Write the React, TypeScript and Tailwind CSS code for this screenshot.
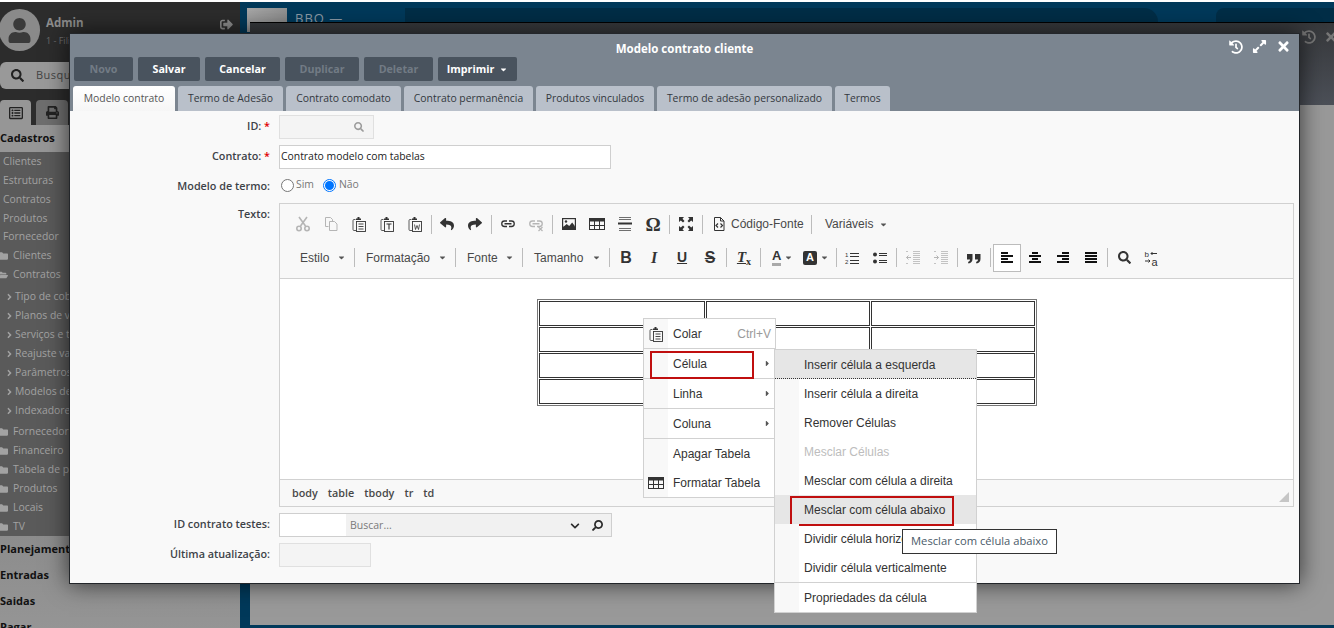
import type { ReactNode } from "react";
import {
  FaCaretDown,
  FaCaretRight,
  FaChevronDown,
  FaExpandAlt,
  FaFolder,
  FaFolderOpen,
  FaHistory,
  FaAngleRight,
  FaPrint,
  FaRegListAlt,
  FaReply,
  FaSearch,
  FaShare,
  FaSignOutAlt,
  FaTimes,
  FaUser,
} from "react-icons/fa";

const OPEN = "font-['Open_Sans','Noto_Sans',sans-serif]";
const ARIAL = "font-['Liberation_Sans',Arial,sans-serif]";

function Svg({ children, dim }: { children: ReactNode; dim?: boolean }) {
  return (
    <svg
      viewBox="0 0 16 16"
      className={`h-4 w-4 ${dim ? "text-[#b5b5b5]" : "text-[#333]"}`}
      fill="none"
      stroke="currentColor"
      strokeWidth="1"
    >
      {children}
    </svg>
  );
}

const Cut = () => (
  <Svg dim>
    <path d="M4 1l6.500 9M12 1L5.500 10" strokeWidth="1.600" />
    <circle cx="4" cy="12.500" r="2.200" strokeWidth="1.600" />
    <circle cx="12" cy="12.500" r="2.200" strokeWidth="1.600" />
  </Svg>
);
const Copy = () => (
  <Svg dim>
    <path d="M2.500 1.500h5l2 2v2M2.500 1.500v9h3" />
    <path d="M6.500 5.500h5l2.500 2.500v6.500h-7.500z" />
  </Svg>
);
const Paste = ({ mark }: { mark: "lines" | "T" | "W" }) => (
  <Svg>
    <path d="M4.500 3.500H3q-1 0-1 1v9q0 1 1 1h2" strokeWidth="0.800" />
    <path d="M5 4V2.500h1.500V1h2v1.500H10V4z" fill="currentColor" stroke="none" />
    <rect x="5.500" y="5.500" width="9" height="10" strokeWidth="0.900" />
    {mark === "lines" && <path d="M7.500 8h5M7.500 10.500h5M7.500 13h5" strokeWidth="0.900" />}
    {mark === "T" && <path d="M7.500 8h5M10 8v5.500" strokeWidth="1.100" />}
    {mark === "W" && <path d="M7.500 8.500l1 5 1.500-4 1.500 4 1-5" strokeWidth="0.800" />}
  </Svg>
);
const LinkIcon = ({ dim }: { dim?: boolean }) => (
  <Svg dim={dim}>
    <path
      d="M7 5H4.500a2.500 2.500 0 0 0 0 5.500H7M9 5h2.500a2.500 2.500 0 0 1 0 5.500H9M4.500 7.750h7"
      strokeWidth="1.300"
    />
    {dim && <path d="M10.500 11l4 4M14.500 11l-4 4" strokeWidth="1.200" />}
  </Svg>
);
const ImageIcon = () => (
  <Svg>
    <rect x="1" y="2" width="14" height="12" fill="currentColor" stroke="none" />
    <rect x="2.200" y="3.200" width="11.600" height="7.500" fill="#f8f8f8" stroke="none" />
    <circle cx="5" cy="5.500" r="1.200" fill="currentColor" stroke="none" />
    <path d="M2.200 11l3.500-3 2.500 2 3-3.500 2.600 3.500v1z" fill="currentColor" stroke="none" />
  </Svg>
);
const TableIcon = () => (
  <Svg>
    <rect x="0.500" y="2.500" width="15" height="11" />
    <rect x="0.500" y="2" width="15" height="3.500" fill="currentColor" stroke="none" />
    <path d="M0.500 9.500h15M5.500 5v8.500M10.500 5v8.500" />
  </Svg>
);
const HrIcon = () => (
  <Svg>
    <path d="M2 1.500h12M2 3.500h12M2 12.500h12M2 14.500h12" strokeWidth="0.700" />
    <path d="M1 7.500h14" strokeWidth="2" />
  </Svg>
);
const MaxIcon = () => (
  <Svg>
    <path
      d="M1 1h5L4.500 2.800 6.500 5 5 6.500 2.800 4.500 1 6zM15 1v5l-1.800-1.500L11 6.500 9.500 5l2-2.200L10 1zM1 15v-5l1.800 1.500L5 9.500 6.500 11l-2 2.200L6 15zM15 15h-5l1.500-1.800L9.500 11l1.500-1.500 2.200 2L15 10z"
      fill="currentColor"
      stroke="none"
    />
  </Svg>
);
const SourceIcon = () => (
  <Svg>
    <path d="M3.500 1.500h6l3.500 3.500v9.500h-9.500z" />
    <path d="M9.500 1.500v3.500h3.500" />
    <path d="M7 7.500l-2 2 2 2M9.500 7.500l2 2-2 2" strokeWidth="1.200" />
  </Svg>
);
const NumList = () => (
  <Svg>
    <text x="1" y="7" fontSize="6" fill="currentColor" stroke="none" fontFamily="Liberation Sans">1</text>
    <text x="1" y="14" fontSize="6" fill="currentColor" stroke="none" fontFamily="Liberation Sans">2</text>
    <path d="M6 3.500h9M6 6.500h9M6 10.500h9M6 13.500h9" />
  </Svg>
);
const BulList = () => (
  <Svg>
    <circle cx="3" cy="4.500" r="2" fill="currentColor" stroke="none" />
    <circle cx="3" cy="11.500" r="2" fill="currentColor" stroke="none" />
    <path d="M7 3.500h8M7 5.500h8M7 10.500h8M7 12.500h8" />
  </Svg>
);
const Indent = ({ out }: { out?: boolean }) => (
  <Svg dim>
    <path d="M8 1.500h7M8 3.500h7M8 5.500h7M8 7.500h7M8 9.500h7M8 11.500h7M8 13.500h7M1 1.500h2M1 13.500h2" strokeWidth="0.800" />
    {out ? (
      <path d="M6 7.500H1.500M3.500 5.500l-2 2 2 2" />
    ) : (
      <path d="M1 7.500h4.500M3.500 5.500l2 2-2 2" />
    )}
  </Svg>
);
const Quote = () => (
  <svg viewBox="0 0 16 16" className="h-4 w-4 text-[#333]" fill="currentColor">
    <path d="M1 4h5.500v5C6.500 11.500 5 13 2.500 13.500L2 12c1.500-.5 2-1.500 2-2.500H1zM9 4h5.500v5c0 2.500-1.500 4-4 4.500L10 12c1.500-.5 2-1.500 2-2.500H9z" />
  </svg>
);
const Align = ({ kind }: { kind: "left" | "center" | "right" | "just" }) => {
  const paths = {
    left: "M2 3h7M2 6h12M2 9h7M2 12h12",
    center: "M5 3h6M2 6h12M5 9h6M2 12h12",
    right: "M7 3h7M2 6h12M7 9h7M2 12h12",
    just: "M2 3h12M2 6h12M2 9h12M2 12h12",
  };
  return (
    <Svg>
      <path d={paths[kind]} strokeWidth="1.800" stroke="#111" />
    </Svg>
  );
};
const Replace = () => (
  <Svg>
    <text x="0.500" y="7" fontSize="8" fill="currentColor" stroke="none" fontFamily="Liberation Sans">b</text>
    <text x="7.500" y="15.500" fontSize="11" fill="currentColor" stroke="none" fontFamily="Liberation Sans">a</text>
    <path d="M7 3.500h6M8.500 2l-1.500 1.500L8.500 5M1 11h5M4.500 9.500L6 11l-1.500 1.500" />
  </Svg>
);

const Btn = ({ children, active }: { children: ReactNode; active?: boolean }) => (
  <div
    className={`flex h-[28px] w-[28px] shrink-0 items-center justify-center ${
      active ? "border border-[#bcbcbc] bg-white" : ""
    }`}
  >
    {children}
  </div>
);

const Sep = ({ l = 2, r = 2 }: { l?: 1 | 2; r?: 1 | 2 | 3 }) => (
  <div
    className={`h-[19px] w-px shrink-0 bg-[#bcbcbc] ${l === 1 ? "ml-px" : "ml-[2px]"} ${
      r === 1 ? "mr-px" : r === 2 ? "mr-[2px]" : "mr-[3px]"
    }`}
  />
);

const Caret = () => <FaCaretDown className="h-[9px] w-[9px] text-[#555]" />;

function Combo({ label, width }: { label: string; width: string }) {
  return (
    <div className={`flex shrink-0 items-center justify-between pl-[10px] pr-[7px] text-[12px] text-[#484848] ${width}`}>
      <span>{label}</span>
      <Caret />
    </div>
  );
}

function Toolbar() {
  return (
    <div className={`border-b border-[#d1d1d1] bg-[#f8f8f8] pb-[4px] pl-[9px] pt-[4px] ${ARIAL}`}>
      <div className="flex h-[32px] items-center">
        <Btn><Cut /></Btn>
        <Btn><Copy /></Btn>
        <Btn><Paste mark="lines" /></Btn>
        <Btn><Paste mark="T" /></Btn>
        <Btn><Paste mark="W" /></Btn>
        <Sep r={1} />
        <Btn><FaReply className="h-[14px] w-[14px] text-[#333]" /></Btn>
        <Btn><FaShare className="h-[14px] w-[14px] text-[#333]" /></Btn>
        <Sep />
        <Btn><LinkIcon /></Btn>
        <Btn><LinkIcon dim /></Btn>
        <Sep />
        <Btn><ImageIcon /></Btn>
        <Btn><TableIcon /></Btn>
        <Btn><HrIcon /></Btn>
        <Btn><span className="font-['Liberation_Serif',serif] text-[19px] font-bold leading-none text-[#333]">Ω</span></Btn>
        <Sep />
        <Btn><MaxIcon /></Btn>
        <Sep />
        <Btn><SourceIcon /></Btn>
        <span className="-ml-[2px] w-[79px] text-[12px] text-[#484848]">Código-Fonte</span>
        <Sep l={1} r={1} />
        <Combo label="Variáveis" width="w-[80px] ml-[2px]" />
      </div>
      <div className="mt-px flex h-[33px] items-center">
        <Combo label="Estilo" width="w-[63px] ml-px" />
        <Sep l={1} r={1} />
        <Combo label="Formatação" width="w-[98px]" />
        <Sep l={1} r={1} />
        <Combo label="Fonte" width="w-[64px]" />
        <Sep l={1} r={1} />
        <Combo label="Tamanho" width="w-[84px]" />
        <Sep l={1} r={2} />
        <Btn><span className="text-[16px] font-bold text-[#333]">B</span></Btn>
        <Btn><span className="font-['Liberation_Serif',serif] text-[16px] font-bold italic text-[#333]">I</span></Btn>
        <Btn><span className="text-[14px] font-bold text-[#333] underline">U</span></Btn>
        <Btn><span className="text-[16px] font-bold text-[#333] line-through">S</span></Btn>
        <Sep r={3} />
        <Btn>
          <span className="font-['Liberation_Serif',serif] text-[15px] font-bold italic text-[#333] underline">
            T<sub className="text-[10px] not-italic">x</sub>
          </span>
        </Btn>
        <Sep l={2} r={1} />
        <div className="flex w-[34px] shrink-0 items-center gap-[3px] pl-[10px]">
          <span className="border-b-[3px] border-[#a9a9a9] text-[13px] font-bold leading-[14px] text-[#333]">A</span>
          <Caret />
        </div>
        <div className="flex w-[39px] shrink-0 items-center gap-[3px] pl-[7px]">
          <span className="flex h-[14px] w-[14px] shrink-0 items-center justify-center rounded-[2px] bg-[#333] text-[11px] font-bold text-white">A</span>
          <Caret />
        </div>
        <Sep l={1} r={1} />
        <Btn><NumList /></Btn>
        <Btn><BulList /></Btn>
        <Sep />
        <Btn><Indent out /></Btn>
        <Btn><Indent /></Btn>
        <Sep />
        <Btn><Quote /></Btn>
        <Sep />
        <Btn active><Align kind="left" /></Btn>
        <Btn><Align kind="center" /></Btn>
        <Btn><Align kind="right" /></Btn>
        <Btn><Align kind="just" /></Btn>
        <Sep />
        <Btn><FaSearch className="h-[13px] w-[13px] text-[#333]" /></Btn>
        <Btn><Replace /></Btn>
      </div>
    </div>
  );
}

function TableDemo() {
  return (
    <table className="border-separate border-spacing-[1px] border border-[#777]">
      <tbody>
        {[0, 1, 2, 3].map((i) => (
          <tr key={i}>
            <td className="h-[25px] w-[166px] border border-[#333]" />
            <td className="h-[25px] w-[164px] border border-[#333]" />
            <td className="h-[25px] w-[164px] border border-[#333]" />
          </tr>
        ))}
      </tbody>
    </table>
  );
}

function Row({ label, req, h, mt, children }: { label?: string; req?: boolean; h: string; mt: string; children: ReactNode }) {
  return (
    <div className={`flex gap-[9px] ${h} ${mt}`}>
      <div className={`w-[200px] shrink-0 pt-[3px] text-right text-[10.800px] font-semibold leading-[16px] text-[#3d4248] ${OPEN}`}>
        {label}
        {req && <span className="text-[#e00000]"> *</span>}
      </div>
      {children}
    </div>
  );
}

function Modal() {
  const actions = [
    { label: "Novo", w: "w-[59px]", off: true },
    { label: "Salvar", w: "w-[62px]" },
    { label: "Cancelar", w: "w-[75px]" },
    { label: "Duplicar", w: "w-[74px]", off: true },
    { label: "Deletar", w: "w-[69px]", off: true },
  ];
  const tabs = [
    { label: "Termo de Adesão", w: "w-[105px]" },
    { label: "Contrato comodato", w: "w-[115px]" },
    { label: "Contrato permanência", w: "w-[129px]" },
    { label: "Produtos vinculados", w: "w-[118px]" },
    { label: "Termo de adesão personalizado", w: "w-[175px]" },
    { label: "Termos", w: "w-[55px]" },
  ];
  return (
    <div className="absolute left-[69px] top-[33px] flex h-[551px] w-[1231px] flex-col border border-[#23262a] bg-[#f9f9f9] shadow-[0_0_22px_rgba(0,0,0,0.65)]">
      <div className="h-[77px] shrink-0 bg-[#7b8590]">
        <div className="relative flex h-[23px] items-center justify-center pt-[6px]">
          <span className={`text-[11.500px] font-bold text-white ${OPEN}`}>Modelo contrato cliente</span>
          <div className="absolute right-[8px] top-[5px] flex items-center gap-[9px] text-white">
            <FaHistory className="h-[14px] w-[14px]" />
            <FaExpandAlt className="h-[15px] w-[15px]" />
            <FaTimes className="h-[15px] w-[15px]" />
          </div>
        </div>
        <div className={`flex gap-[5px] pl-[4px] text-[10.700px] font-bold ${OPEN}`}>
          {actions.map((a) => (
            <div
              key={a.label}
              className={`flex h-[24px] items-center justify-center rounded-[2px] bg-[#49535e] ${a.w} ${a.off ? "text-[#727b85]" : "text-white"}`}
            >
              {a.label}
            </div>
          ))}
          <div className="flex h-[24px] w-[79px] items-center justify-center gap-[5px] rounded-[2px] bg-[#49535e] text-white">
            Imprimir
            <FaCaretDown className="h-[9px] w-[9px]" />
          </div>
        </div>
        <div className={`mt-[5px] flex h-[25px] gap-[3px] pl-[3px] text-[10.400px] text-[#33383e] ${OPEN}`}>
          <div className="flex w-[102px] items-center justify-center rounded-t-[3px] bg-gradient-to-b from-white to-[#f6f6f6] pt-px text-[#555]">
            Modelo contrato
          </div>
          {tabs.map((t) => (
            <div key={t.label} className={`flex items-center justify-center rounded-t-[3px] bg-[#b9c0ca] pt-px ${t.w}`}>
              {t.label}
            </div>
          ))}
        </div>
      </div>

      <Row label="ID:" req h="h-[24px]" mt="mt-[4px]">
        <div className="flex w-[95px] items-center justify-end border border-[#e0e0e0] bg-[#f4f4f4] pr-[9px]">
          <FaSearch className="h-[10px] w-[10px] text-[#9c9c9c]" />
        </div>
      </Row>
      <Row label="Contrato:" req h="h-[24px]" mt="mt-[6px]">
        <div className={`flex w-[332px] items-center border border-[#cfcfcf] bg-white pl-[1px] text-[10.400px] text-[#222] ${OPEN}`}>
          Contrato modelo com tabelas
        </div>
      </Row>
      <Row label="Modelo de termo:" h="h-[20px]" mt="mt-[6px]">
        <div className={`flex items-center pl-[2px] text-[10.400px] text-[#777] ${OPEN}`}>
          <span className="h-[13px] w-[13px] rounded-full border border-[#777] bg-white" />
          <span className="ml-[2px]">Sim</span>
          <span className="ml-[9px] flex h-[13px] w-[13px] items-center justify-center rounded-full border border-[#0075ff] bg-white">
            <span className="h-[9px] w-[9px] rounded-full bg-[#0075ff]" />
          </span>
          <span className="ml-[3px]">Não</span>
        </div>
      </Row>
      <Row label="Texto:" h="h-[304px]" mt="mt-[8px]">
        <div className="flex w-[1015px] flex-col border border-[#d1d1d1] bg-white">
          <Toolbar />
          <div className="flex h-[200px] items-start justify-center pt-[20px]">
            <TableDemo />
          </div>
          <div className={`relative flex h-[27px] items-center gap-[10px] border-t border-[#d1d1d1] bg-[#f8f8f8] pl-[12px] text-[10.800px] font-semibold text-[#484848] ${OPEN}`}>
            <span>body</span>
            <span>table</span>
            <span>tbody</span>
            <span>tr</span>
            <span>td</span>
            <svg viewBox="0 0 10 10" className="absolute bottom-[4px] right-[4px] h-[10px] w-[10px]">
              <polygon points="10,0 10,10 0,10" fill="#c6c6c6" />
            </svg>
          </div>
        </div>
      </Row>
      <Row label="ID contrato testes:" h="h-[24px]" mt="mt-[6px]">
        <div className="flex w-[333px] border border-[#cfcfcf]">
          <div className="w-[66px] bg-white" />
          <div className={`flex flex-1 items-center bg-[#f1f1f1] pl-[4px] pt-px text-[10.500px] text-[#7a7a7a] ${OPEN}`}>
            <span className="flex-1">Buscar...</span>
            <FaChevronDown className="mr-[12px] h-[10px] w-[10px] text-[#2b2b2b]" />
            <FaSearch className="mr-[8px] h-[11px] w-[11px] -scale-x-100 text-[#2b2b2b]" />
          </div>
        </div>
      </Row>
      <Row label="Última atualização:" h="h-[24px]" mt="mt-[6px]">
        <div className="w-[92px] border border-[#e0e0e0] bg-[#f4f4f4]" />
      </Row>
    </div>
  );
}

function MenuItem({
  label,
  icon,
  hint,
  arrow,
  sep,
  box,
  h = "h-[30px]",
}: {
  label: string;
  icon?: ReactNode;
  hint?: string;
  arrow?: boolean;
  sep?: boolean;
  box?: boolean;
  h?: string;
}) {
  return (
    <div className={`relative flex items-center ${h} ${sep ? "border-b border-[#d1d1d1]" : ""}`}>
      <div className="flex h-full w-[24px] shrink-0 items-center justify-center bg-[#f8f8f8]">{icon}</div>
      <span className="ml-[5px] flex-1">{label}</span>
      {hint && <span className="mr-[4px] text-[#9a9a9a]">{hint}</span>}
      {arrow && <FaCaretRight className="mr-[3px] h-[9px] w-[9px] text-[#555]" />}
      {box && <div className="absolute left-[6px] top-[2px] h-[28px] w-[104px] border-2 border-[#c00f0f]" />}
    </div>
  );
}

function CellMenu() {
  return (
    <div className={`absolute left-[643px] top-[318px] w-[133px] border border-[#d1d1d1] bg-white text-[12px] text-[#333] ${ARIAL}`}>
      <MenuItem label="Colar" hint="Ctrl+V" sep icon={<Paste mark="lines" />} />
      <MenuItem label="Célula" arrow sep box />
      <MenuItem label="Linha" arrow sep />
      <MenuItem label="Coluna" arrow sep />
      <MenuItem label="Apagar Tabela" h="h-[29px]" />
      <MenuItem label="Formatar Tabela" h="h-[29px]" icon={<TableIcon />} />
    </div>
  );
}

function SubItem({ label, hl, off, dotted, sep, box }: { label: string; hl?: boolean; off?: boolean; dotted?: boolean; sep?: boolean; box?: boolean }) {
  return (
    <div
      className={`relative flex items-center ${sep ? "h-[30px] border-t border-[#d1d1d1]" : "h-[29px]"} ${hl ? "bg-[#e6e6e6]" : ""} ${
        dotted ? "border-b border-dotted border-[#333] pt-[2px]" : ""
      }`}
    >
      <div className={`h-full w-[24px] shrink-0 ${hl ? "" : "bg-[#f8f8f8]"}`} />
      <span className={`ml-[5px] ${off ? "text-[#bdbdbd]" : ""}`}>{label}</span>
      {box && <div className="absolute left-[15px] top-px h-[30px] w-[164px] border-2 border-[#c00f0f]" />}
    </div>
  );
}

function SubMenu() {
  return (
    <div className={`absolute left-[774px] top-[349px] w-[203px] border border-[#d1d1d1] bg-white text-[12px] text-[#333] ${ARIAL}`}>
      <SubItem label="Inserir célula a esquerda" hl dotted />
      <SubItem label="Inserir célula a direita" />
      <SubItem label="Remover Células" />
      <SubItem label="Mesclar Células" off />
      <SubItem label="Mesclar com célula a direita" />
      <SubItem label="Mesclar com célula abaixo" hl box />
      <SubItem label="Dividir célula horizontalmente" />
      <SubItem label="Dividir célula verticalmente" />
      <SubItem label="Propriedades da célula" sep />
    </div>
  );
}

function SideLink({ label, kind }: { label: string; kind: "plain" | "folder" | "open" | "sub" }) {
  return (
    <div className={`flex h-[19px] items-center text-[10.400px] text-[#a2a2a2] ${kind === "sub" ? "pl-[6px]" : ""} ${kind === "plain" ? "pl-[3px]" : ""}`}>
      {kind === "folder" && <FaFolder className="-ml-[2px] mr-[5px] h-[10px] w-[10px] shrink-0 text-[#a2a2a2]" />}
      {kind === "open" && <FaFolderOpen className="-ml-[2px] mr-[5px] h-[10px] w-[10px] shrink-0 text-[#a2a2a2]" />}
      {kind === "sub" && <FaAngleRight className="mr-[2px] h-[10px] w-[7px] shrink-0 text-[#a2a2a2]" />}
      <span className="whitespace-nowrap">{label}</span>
    </div>
  );
}

function Sidebar() {
  return (
    <aside className={`flex w-[240px] shrink-0 flex-col overflow-hidden ${OPEN}`}>
      <div className="h-[123px] shrink-0 bg-[#2c2c2c]">
        <div className="flex h-[60px] items-start">
          <div className="-ml-[1px] mt-[7px] flex h-[42px] w-[41px] items-end justify-center overflow-hidden rounded-full bg-[#8a8a8a] pb-[8px]">
            <FaUser className="h-[25px] w-[25px] text-[#3a3a3a]" />
          </div>
          <div className="ml-[6px] mt-[13px] flex-1">
            <div className="text-[11.500px] font-bold leading-[16px] text-[#8c8c8c]">Admin</div>
            <div className="mt-[3px] text-[9px] leading-[14px] text-[#6c6c6c]">1 - Filial</div>
          </div>
          <FaSignOutAlt className="mr-[7px] mt-[16px] h-[13px] w-[13px] text-[#8c8c8c]" />
        </div>
        <div className="flex h-[27px] items-center rounded-[6px] bg-[#999] pl-[11px] text-[11px] text-[#444]">
          <FaSearch className="h-[13px] w-[13px] text-[#222]" />
          <span className="ml-[12px] tracking-[0.5px]">Busque no menu</span>
        </div>
        <div className="mt-[11px] flex h-[25px] gap-[5px]">
          <div className="flex w-[31px] items-center justify-center rounded-t-[4px] bg-[#969696]">
            <FaRegListAlt className="h-[14px] w-[14px] text-[#222]" />
          </div>
          <div className="flex w-[32px] items-center justify-center rounded-t-[4px] bg-[#6e6e6e]">
            <FaPrint className="h-[13px] w-[13px] text-[#222]" />
          </div>
        </div>
      </div>
      <div className="flex h-[27px] shrink-0 items-center bg-[#969696] text-[11px] font-bold text-[#111]">Cadastros</div>
      <div className="flex h-[384px] shrink-0 flex-col bg-[#5a5a5a]">
        <SideLink label="Clientes" kind="plain" />
        <SideLink label="Estruturas" kind="plain" />
        <SideLink label="Contratos" kind="plain" />
        <SideLink label="Produtos" kind="plain" />
        <SideLink label="Fornecedor" kind="plain" />
        <SideLink label="Clientes" kind="folder" />
        <SideLink label="Contratos" kind="open" />
        <div className="h-[3px]" />
        <SideLink label="Tipo de cobrança" kind="sub" />
        <SideLink label="Planos de venda" kind="sub" />
        <SideLink label="Serviços e taxas" kind="sub" />
        <SideLink label="Reajuste valores" kind="sub" />
        <SideLink label="Parâmetros" kind="sub" />
        <SideLink label="Modelos de contrato" kind="sub" />
        <SideLink label="Indexadores" kind="sub" />
        <div className="h-[2px]" />
        <SideLink label="Fornecedor" kind="folder" />
        <SideLink label="Financeiro" kind="folder" />
        <SideLink label="Tabela de preços" kind="folder" />
        <SideLink label="Produtos" kind="folder" />
        <SideLink label="Locais" kind="folder" />
        <SideLink label="TV" kind="folder" />
      </div>
      <div className="flex flex-1 flex-col bg-gradient-to-b from-[#8c8c8c] to-[#969696] text-[11px] font-bold text-[#111]">
        {["Planejamento", "Entradas", "Saidas", "Pagar"].map((s) => (
          <div key={s} className="flex h-[26px] shrink-0 items-center">
            {s}
          </div>
        ))}
      </div>
    </aside>
  );
}

function Backdrop() {
  return (
    <main className={`relative flex flex-1 flex-col overflow-hidden bg-[#01395a] ${OPEN}`}>
      <div className="flex h-[20px] shrink-0">
        <div className="ml-[7px] mt-[6px] h-[24px] w-[40px] shrink-0 bg-gradient-to-br from-[#a8a8a8] to-[#7d7d7d]" />
        <span className="ml-[8px] mt-[7px] w-[60px] shrink-0 text-[13px] tracking-[1px] text-[#8b9aa5]">BBO —</span>
        <div className="ml-[50px] mt-[6px] w-[753px] shrink-0 rounded-tr-[16px] bg-[#012d46]" />
        <div className="ml-[58px] mt-[6px] flex-1 rounded-tl-[8px] bg-[#012d46]" />
      </div>
      <div className="relative ml-[10px] flex flex-1 flex-col border-t border-black">
        <div className="flex h-[82px] shrink-0 justify-end gap-[8px] bg-gradient-to-b from-[#36383b] to-[#4c5058] pt-[7px] text-[#777]">
          <FaHistory className="h-[14px] w-[14px]" />
          <FaTimes className="-mr-[4px] h-[14px] w-[14px]" />
        </div>
        <div className="flex-1 bg-[#999]" />
        <div className="h-[3px] shrink-0 bg-[#01395a]" />
      </div>
    </main>
  );
}

export default function App() {
  return (
    <div className="relative h-[628px] w-[1334px] overflow-hidden bg-white pt-[2px]">
      <div className="flex h-[626px]">
        <Sidebar />
        <Backdrop />
      </div>
      <Modal />
      <CellMenu />
      <SubMenu />
      <div className={`absolute left-[902px] top-[529px] flex h-[25px] w-[155px] items-center justify-center border border-[#333] bg-white text-[11.200px] text-[#4a5a68] ${OPEN}`}>
        Mesclar com célula abaixo
      </div>
    </div>
  );
}
